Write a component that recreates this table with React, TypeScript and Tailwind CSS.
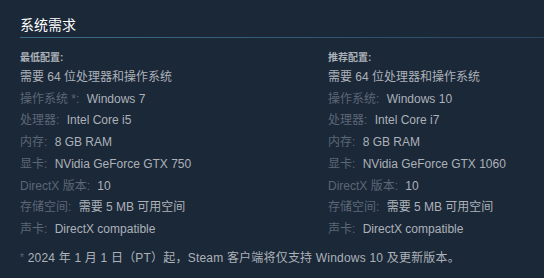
const font = {
  fontFamily: '"Liberation Sans", Arial, "Noto Sans CJK SC", sans-serif',
};

type Row = { label: string; value: string };

const minimum: Row[] = [
  { label: "操作系统 *:", value: "Windows 7" },
  { label: "处理器:", value: "Intel Core i5" },
  { label: "内存:", value: "8 GB RAM" },
  { label: "显卡:", value: "NVidia GeForce GTX 750" },
  { label: "DirectX 版本:", value: "10" },
  { label: "存储空间:", value: "需要 5 MB 可用空间" },
  { label: "声卡:", value: "DirectX compatible" },
];

const recommended: Row[] = [
  { label: "操作系统:", value: "Windows 10" },
  { label: "处理器:", value: "Intel Core i7" },
  { label: "内存:", value: "8 GB RAM" },
  { label: "显卡:", value: "NVidia GeForce GTX 1060" },
  { label: "DirectX 版本:", value: "10" },
  { label: "存储空间:", value: "需要 5 MB 可用空间" },
  { label: "声卡:", value: "DirectX compatible" },
];

function Column({ title, rows }: { title: string; rows: Row[] }) {
  return (
    <div className="w-[308px] shrink-0">
      <div className="text-[10px] font-bold leading-[14px] text-[#acb2b8]">
        {title}
      </div>
      <ul className="mt-[2px] text-[12px] leading-[21.7px]">
        <li className="text-[#acb2b8]">需要 64 位处理器和操作系统</li>
        {rows.map((r) => (
          <li key={r.label} className="whitespace-nowrap">
            <span className="text-[#5b6776]">{r.label}</span>{" "}
            <span className="ml-1 text-[#acb2b8]">{r.value}</span>
          </li>
        ))}
      </ul>
    </div>
  );
}

export default function App() {
  return (
    <div
      className="w-[544px] h-[278px] overflow-hidden bg-[#1b2838] pl-5"
      style={font}
    >
      <h2 className="pt-[15px] text-[14px] leading-[20px] text-white">
        系统需求
      </h2>
      <div className="mt-[2px] h-px bg-gradient-to-r from-[#3b6e8c] to-[#2a475e]" />
      <div className="mt-[13px] flex">
        <Column title="最低配置:" rows={minimum} />
        <Column title="推荐配置:" rows={recommended} />
      </div>
      <p className="mt-[7px] text-[12px] leading-[20px] tracking-[0.2px] text-[#acb2b8] whitespace-nowrap">
        <span className="text-[10px] text-[#5b6776] align-top">*</span>{" "}
        2024 年 1 月 1 日（PT）起，Steam 客户端将仅支持 Windows 10 及更新版本。
      </p>
    </div>
  );
}
